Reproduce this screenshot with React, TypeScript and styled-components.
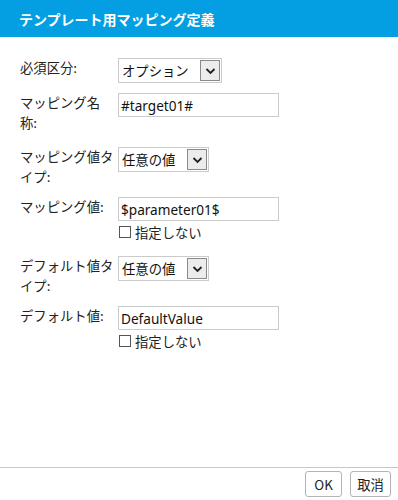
import React from 'react';
import styled, { createGlobalStyle } from 'styled-components';

const GlobalStyle = createGlobalStyle`
  html, body {
    margin: 0;
    padding: 0;
    background: #fff;
  }
  body {
    font-family: "Noto Sans CJK JP", "Noto Sans", sans-serif;
    color: #222;
  }
`;

/* layout */
const Dialog = styled.div`
  width: 398px;
  height: 500px;
  display: flex;
  flex-direction: column;
  background: #fff;
`;

const Header = styled.div`
  height: 37px;
  background: #039fe2;
  color: #fff;
  display: flex;
  align-items: center;
  padding-left: 19px;
  font-size: 14px;
  font-weight: bold;
`;

const Body = styled.div`
  flex: 1;
  padding: 21px 0 0 20px;
`;

const Row = styled.div<{ $mb?: number }>`
  display: flex;
  align-items: flex-start;
  margin-bottom: ${(p) => (p.$mb ?? 10)}px;
`;

const Label = styled.div`
  width: 96px;
  margin-right: 2px;
  font-size: 13.33px;
  line-height: 20px;
  color: #222;
  line-break: strict;
`;

const Field = styled.div`
  display: flex;
  flex-direction: column;
`;

/* controls */
const TextBox = styled.div`
  box-sizing: border-box;
  width: 161px;
  height: 24px;
  border: 1px solid #cbcbcb;
  padding: 0 2px;
  display: flex;
  align-items: center;
  font-family: "Noto Sans", "Noto Sans CJK JP", sans-serif;
  font-size: 13.6px;
  color: #111;
`;

const SelectBox = styled.div<{ $w: number }>`
  box-sizing: border-box;
  width: ${(p) => p.$w}px;
  height: 25px;
  border: 1px solid #cbcbcb;
  display: flex;
  align-items: center;
  justify-content: space-between;
  padding: 1px;
`;

const SelectText = styled.span`
  padding-left: 2px;
  font-size: 13.33px;
  color: #111;
`;

const ArrowBox = styled.span`
  box-sizing: border-box;
  width: 20px;
  height: 21px;
  border: 1px solid #8a8a8a;
  background: #ececec;
  display: flex;
  align-items: center;
  justify-content: center;
`;

const CheckRow = styled.label`
  display: flex;
  align-items: center;
  margin-top: 3px;
  height: 16px;
  font-size: 13.33px;
  color: #222;
`;

const CheckBox = styled.span`
  box-sizing: border-box;
  width: 12px;
  height: 12px;
  border: 1px solid #555;
  margin: 0 4px 0 1px;
  background: #fff;
`;

const Footer = styled.div`
  border-top: 1px solid #c8c8c8;
  height: 32px;
  display: flex;
  align-items: center;
  justify-content: flex-end;
  gap: 8px;
  padding-right: 7px;
`;

const Button = styled.button<{ $w: number }>`
  box-sizing: border-box;
  width: ${(p) => p.$w}px;
  height: 26px;
  border: 1px solid #b4b4b4;
  border-radius: 3px;
  background: #fff;
  font-family: "Noto Sans CJK JP", "Noto Sans", sans-serif;
  font-size: 13.33px;
  color: #222;
  padding: 0;
`;

const Chevron = () => (
  <svg width="11" height="8" viewBox="0 0 11 8">
    <path d="M1.5 2 L5.5 6 L9.5 2" fill="none" stroke="#222" strokeWidth="1.8" />
  </svg>
);

const Select: React.FC<{ value: string; width: number }> = ({ value, width }) => (
  <SelectBox $w={width}>
    <SelectText>{value}</SelectText>
    <ArrowBox>
      <Chevron />
    </ArrowBox>
  </SelectBox>
);

const Check: React.FC<{ text: string }> = ({ text }) => (
  <CheckRow>
    <CheckBox />
    {text}
  </CheckRow>
);

export default function App() {
  return (
    <>
      <GlobalStyle />
      <Dialog>
        <Header>テンプレート用マッピング定義</Header>
        <Body>
          <Row>
            <Label>必須区分:</Label>
            <Select value="オプション" width={104} />
          </Row>
          <Row $mb={14}>
            <Label>マッピング名称:</Label>
            <TextBox>#target01#</TextBox>
          </Row>
          <Row>
            <Label>マッピング値タイプ:</Label>
            <Select value="任意の値" width={91} />
          </Row>
          <Row $mb={16}>
            <Label>マッピング値:</Label>
            <Field>
              <TextBox>$parameter01$</TextBox>
              <Check text="指定しない" />
            </Field>
          </Row>
          <Row>
            <Label>デフォルト値タイプ:</Label>
            <Select value="任意の値" width={91} />
          </Row>
          <Row>
            <Label>デフォルト値:</Label>
            <Field>
              <TextBox>DefaultValue</TextBox>
              <Check text="指定しない" />
            </Field>
          </Row>
        </Body>
        <Footer>
          <Button $w={37}>OK</Button>
          <Button $w={41}>取消</Button>
        </Footer>
      </Dialog>
    </>
  );
}
